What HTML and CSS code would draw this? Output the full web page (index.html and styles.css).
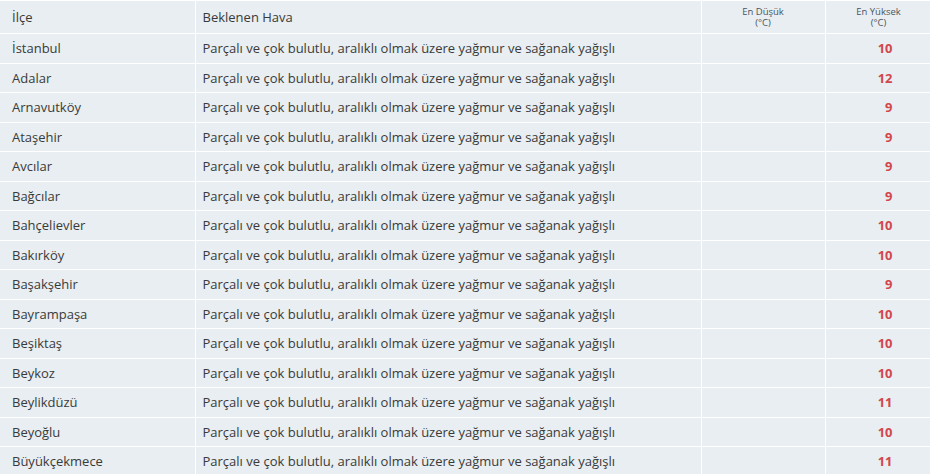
FILE: index.html
```html
<!DOCTYPE html>
<html>
	<head>
		<meta charset="UTF-8">
		<link rel="stylesheet" href="styles.css">
	</head>
	<body>
		<table class="forecast">
			<colgroup>
				<col class="c-ilce">
				<col class="c-hava">
				<col class="c-min">
				<col class="c-max">
			</colgroup>
			<thead>
				<tr>
					<th>İlçe</th>
					<th>Beklenen Hava</th>
					<th class="temp">En Düşük<br>(°C)</th>
					<th class="temp">En Yüksek<br>(°C)</th>
				</tr>
			</thead>
			<tbody>
				<tr><td>İstanbul</td><td>Parçalı ve çok bulutlu, aralıklı olmak üzere yağmur ve sağanak yağışlı</td><td></td><td class="max">10</td></tr>
				<tr><td>Adalar</td><td>Parçalı ve çok bulutlu, aralıklı olmak üzere yağmur ve sağanak yağışlı</td><td></td><td class="max">12</td></tr>
				<tr><td>Arnavutköy</td><td>Parçalı ve çok bulutlu, aralıklı olmak üzere yağmur ve sağanak yağışlı</td><td></td><td class="max">9</td></tr>
				<tr><td>Ataşehir</td><td>Parçalı ve çok bulutlu, aralıklı olmak üzere yağmur ve sağanak yağışlı</td><td></td><td class="max">9</td></tr>
				<tr><td>Avcılar</td><td>Parçalı ve çok bulutlu, aralıklı olmak üzere yağmur ve sağanak yağışlı</td><td></td><td class="max">9</td></tr>
				<tr><td>Bağcılar</td><td>Parçalı ve çok bulutlu, aralıklı olmak üzere yağmur ve sağanak yağışlı</td><td></td><td class="max">9</td></tr>
				<tr><td>Bahçelievler</td><td>Parçalı ve çok bulutlu, aralıklı olmak üzere yağmur ve sağanak yağışlı</td><td></td><td class="max">10</td></tr>
				<tr><td>Bakırköy</td><td>Parçalı ve çok bulutlu, aralıklı olmak üzere yağmur ve sağanak yağışlı</td><td></td><td class="max">10</td></tr>
				<tr><td>Başakşehir</td><td>Parçalı ve çok bulutlu, aralıklı olmak üzere yağmur ve sağanak yağışlı</td><td></td><td class="max">9</td></tr>
				<tr><td>Bayrampaşa</td><td>Parçalı ve çok bulutlu, aralıklı olmak üzere yağmur ve sağanak yağışlı</td><td></td><td class="max">10</td></tr>
				<tr><td>Beşiktaş</td><td>Parçalı ve çok bulutlu, aralıklı olmak üzere yağmur ve sağanak yağışlı</td><td></td><td class="max">10</td></tr>
				<tr><td>Beykoz</td><td>Parçalı ve çok bulutlu, aralıklı olmak üzere yağmur ve sağanak yağışlı</td><td></td><td class="max">10</td></tr>
				<tr><td>Beylikdüzü</td><td>Parçalı ve çok bulutlu, aralıklı olmak üzere yağmur ve sağanak yağışlı</td><td></td><td class="max">11</td></tr>
				<tr><td>Beyoğlu</td><td>Parçalı ve çok bulutlu, aralıklı olmak üzere yağmur ve sağanak yağışlı</td><td></td><td class="max">10</td></tr>
				<tr><td>Büyükçekmece</td><td>Parçalı ve çok bulutlu, aralıklı olmak üzere yağmur ve sağanak yağışlı</td><td></td><td class="max">11</td></tr>
			</tbody>
		</table>
	</body>
</html>
```

FILE: styles.css
```css
html, body {
	margin: 0;
	padding: 0;
	overflow: hidden;
	background: #fff;
}

.forecast {
	border-collapse: collapse;
	width: 932px;
	font-family: "Open Sans", sans-serif;
	font-size: 13px;
	color: #3a3a3a;
	table-layout: fixed;
}
.c-ilce { width: 195px; }
.c-hava { width: 506px; }
.c-min { width: 124px; }
.c-max { width: 107px; }

.forecast th, .forecast td {
	background: #e8eef1;
	border: 1px solid #fff;
	padding: 0 7px;
	text-align: left;
	font-weight: normal;
	white-space: nowrap;
	overflow: hidden;
}
.forecast tr > :first-child {
	border-left: 0;
	padding-left: 12px;
}
.forecast thead tr {
	height: 33px;
}
.forecast tbody tr {
	height: 29.5px;
}
.forecast th.temp {
	font-size: 9.5px;
	line-height: 11px;
	color: #4a5560;
	text-align: center;
	vertical-align: top;
	padding-top: 5px;
}
.forecast td.max {
	text-align: right;
	padding-right: 39px;
	font-weight: bold;
	color: #d2464b;
}
```
